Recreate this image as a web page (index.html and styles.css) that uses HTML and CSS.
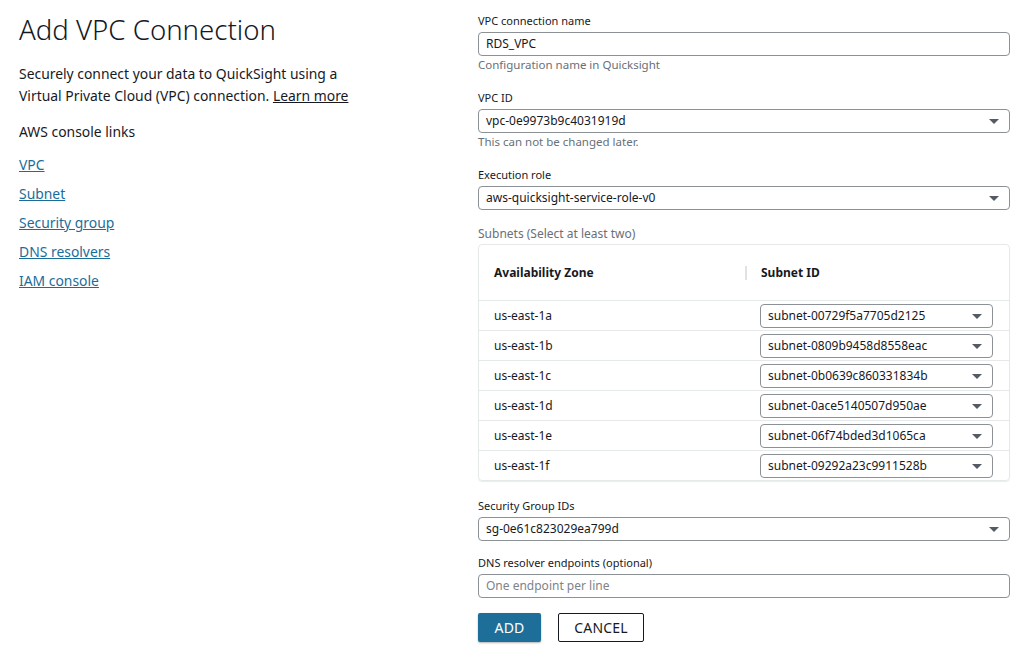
FILE: index.html
```html
<!DOCTYPE html>
<html>
<head>
<meta charset="utf-8">
<link rel="stylesheet" href="styles.css">
</head>
<body>
<div class="page">
  <aside class="intro">
    <h1 class="title">Add VPC Connection</h1>
    <p class="lead">Securely connect your data to QuickSight using a Virtual Private Cloud (VPC) connection. <a class="learn" href="#">Learn more</a></p>
    <div class="links-title">AWS console links</div>
    <ul class="links">
      <li><a href="#">VPC</a></li>
      <li><a href="#">Subnet</a></li>
      <li><a href="#">Security group</a></li>
      <li><a href="#">DNS resolvers</a></li>
      <li><a href="#">IAM console</a></li>
    </ul>
  </aside>
  <main class="form">
    <div class="field field-hint">
      <label class="label">VPC connection name</label>
      <div class="control">RDS_VPC</div>
      <div class="hint">Configuration name in Quicksight</div>
    </div>
    <div class="field field-hint">
      <label class="label">VPC ID</label>
      <div class="control select">vpc-0e9973b9c4031919d<span class="caret"></span></div>
      <div class="hint">This can not be changed later.</div>
    </div>
    <div class="field field-role">
      <label class="label">Execution role</label>
      <div class="control select">aws-quicksight-service-role-v0<span class="caret"></span></div>
    </div>
    <div class="field field-subnets">
      <label class="label muted">Subnets (Select at least two)</label>
      <div class="table">
        <div class="thead">
          <div class="th th-zone">Availability Zone</div>
          <div class="th th-subnet"><span class="divider"></span>Subnet ID</div>
        </div>
        <div class="row"><div class="zone">us-east-1a</div><div class="cell"><div class="control select small">subnet-00729f5a7705d2125<span class="caret"></span></div></div></div>
        <div class="row"><div class="zone">us-east-1b</div><div class="cell"><div class="control select small">subnet-0809b9458d8558eac<span class="caret"></span></div></div></div>
        <div class="row"><div class="zone">us-east-1c</div><div class="cell"><div class="control select small">subnet-0b0639c860331834b<span class="caret"></span></div></div></div>
        <div class="row"><div class="zone">us-east-1d</div><div class="cell"><div class="control select small">subnet-0ace5140507d950ae<span class="caret"></span></div></div></div>
        <div class="row"><div class="zone">us-east-1e</div><div class="cell"><div class="control select small">subnet-06f74bded3d1065ca<span class="caret"></span></div></div></div>
        <div class="row"><div class="zone">us-east-1f</div><div class="cell"><div class="control select small">subnet-09292a23c9911528b<span class="caret"></span></div></div></div>
      </div>
    </div>
    <div class="field field-sg">
      <label class="label">Security Group IDs</label>
      <div class="control select">sg-0e61c823029ea799d<span class="caret"></span></div>
    </div>
    <div class="field field-dns">
      <label class="label">DNS resolver endpoints (optional)</label>
      <div class="control placeholder">One endpoint per line</div>
    </div>
    <div class="actions">
      <button class="btn btn-primary">ADD</button>
      <button class="btn btn-secondary">CANCEL</button>
    </div>
  </main>
</div>
</body>
</html>
```

FILE: styles.css
```css
* { box-sizing: border-box; }
html, body { margin: 0; padding: 0; background: #ffffff; }
body {
  font-family: "Noto Sans", "Open Sans", sans-serif;
  color: #16191f;
  width: 1015px;
  height: 654px;
  overflow: hidden;
}
.page {
  display: grid;
  grid-template-columns: 459px 532px;
  padding-left: 19px;
}
.intro { padding-top: 12px; }
.title {
  margin: 0;
  font-size: 27.6px;
  font-weight: 300;
  line-height: 34px;
  color: #16191f;
}
.lead {
  margin: 17px 0 0 0;
  font-size: 13.9px;
  line-height: 22px;
  width: 350px;
}
.lead a, .links a { text-decoration: underline; }
.learn { color: #16191f; }
.links-title {
  margin-top: 14px;
  font-size: 13.9px;
  line-height: 22px;
}
.links {
  list-style: none;
  margin: 11px 0 0 0;
  padding: 0;
  display: flex;
  flex-direction: column;
  gap: 7px;
}
.links li { font-size: 13.9px; line-height: 22px; }
.links a { color: #1b6d99; }

.form { padding-top: 13px; display: flex; flex-direction: column; }
.field { display: flex; flex-direction: column; margin-bottom: 18px; }
.field-hint { margin-bottom: 17px; }
.field-role { margin-bottom: 16px; }
.field-subnets { margin-bottom: 17px; }
.field-sg { margin-bottom: 14px; }
.field-dns { margin-bottom: 15px; }
.label { font-size: 11px; line-height: 16px; margin-bottom: 3px; color: #16191f; }
.label.muted { color: #687078; margin-bottom: 2px; font-size: 12px; }
.control {
  position: relative;
  height: 24px;
  border: 1px solid #8c9196;
  border-radius: 4px;
  padding: 0 7px;
  font-size: 12px;
  line-height: 22px;
  color: #16191f;
  background: #fff;
}
.control.placeholder { color: #7d8389; }
.caret {
  position: absolute;
  right: 10px;
  top: 9px;
  width: 0; height: 0;
  border-left: 5px solid transparent;
  border-right: 5px solid transparent;
  border-top: 5px solid #545b64;
}
.hint { font-size: 11.5px; line-height: 16px; color: #687078; margin-top: 1px; }

.table {
  border: 1px solid #e6e9ea;
  border-radius: 4px;
  box-shadow: 0 1px 1px rgba(0,0,0,0.08);
}
.thead { display: flex; height: 55px; align-items: center; }
.th { font-size: 12px; font-weight: 700; }
.th-zone { width: 266px; padding-left: 15px; }
.th-subnet { display: flex; align-items: center; padding-left: 0; }
.divider {
  display: inline-block;
  width: 2px; height: 14px;
  background: #dfe3e4;
  margin-right: 14px;
}
.row {
  display: flex;
  align-items: center;
  height: 30px;
  border-top: 1px solid #e6e9ea;
}
.zone { width: 281px; padding-left: 15px; font-size: 12px; }
.cell { width: 233px; }
.control.small { height: 24px; }

.actions { display: flex; gap: 17px; }
.btn {
  font-family: "Noto Sans", "Open Sans", sans-serif;
  font-size: 14px;
  height: 29px;
  border-radius: 2px;
  cursor: pointer;
  letter-spacing: 0.2px;
  padding: 0;
}
.btn-primary {
  width: 63px;
  background: #1d6f9a;
  color: #fff;
  border: none;
  box-shadow: 0 1px 2px rgba(0,0,0,0.3);
}
.btn-secondary {
  width: 86px;
  background: #fff;
  color: #16191f;
  border: 1px solid #16191f;
}
```
